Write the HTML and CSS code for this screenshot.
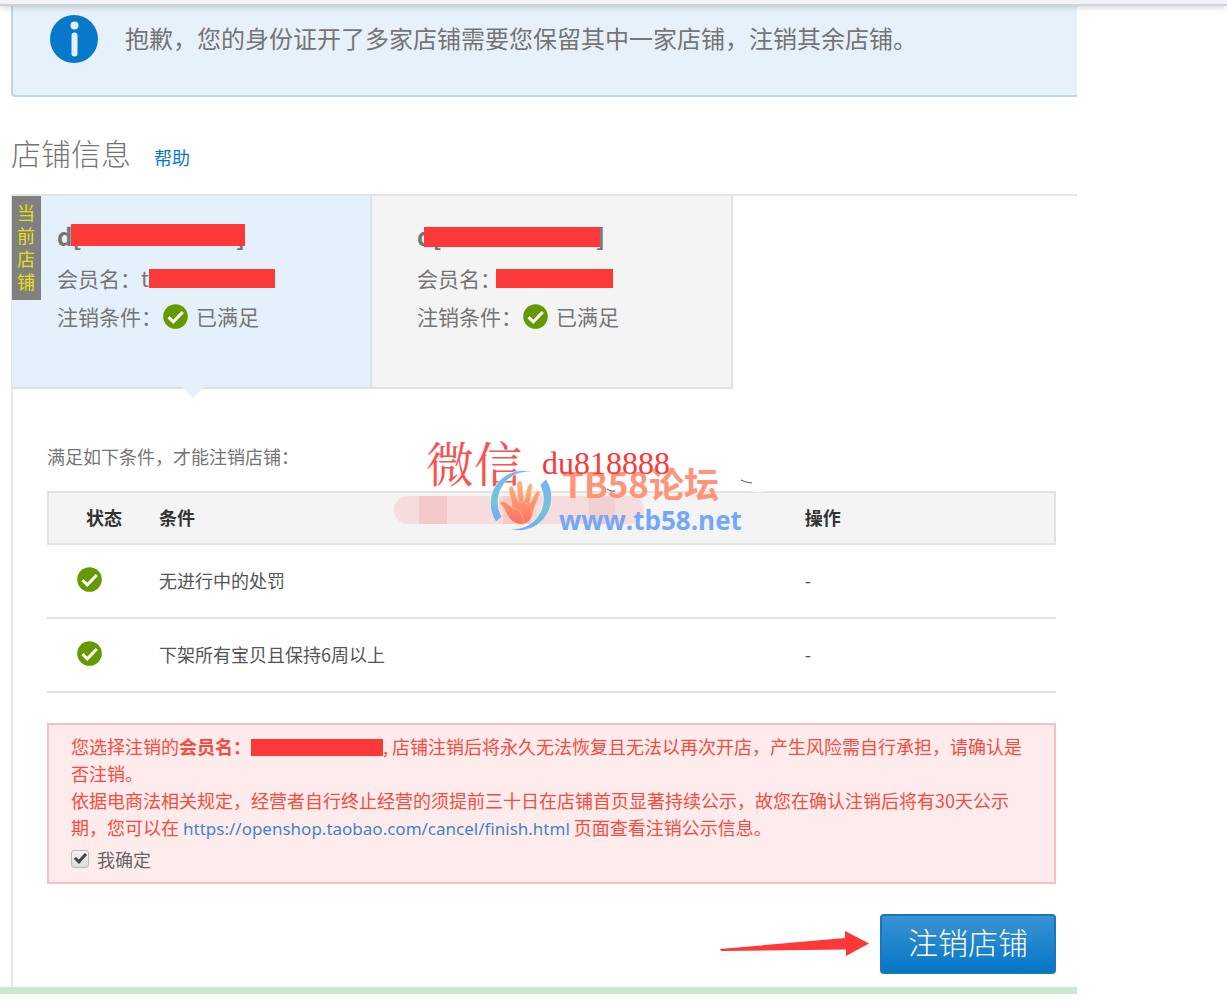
FILE: index.html
```html
<!DOCTYPE html>
<html lang="zh-CN">

<head>
    <meta charset="utf-8" />
    <title>注销店铺</title>
    <link rel="stylesheet" href="styles.css">
</head>

<body>
    <svg width="0" height="0" class="defs">
        <symbol id="ok" viewBox="0 0 25 25">
            <circle cx="12.5" cy="12.5" r="12.3" fill="#690" />
            <path d="M5.5 13.2l4.8 4.6L19.8 8" fill="none" stroke="#fff" stroke-width="3" />
        </symbol>
    </svg>
    <div class="topbar"></div>
    <div id="page">
        <div class="notice">
            <svg class="info" viewBox="0 0 48 48">
                <circle cx="24" cy="24" r="24" fill="#0679cb" />
                <circle cx="24.500" cy="10.500" r="4" fill="#e6f1fa" />
                <rect x="21.500" y="17.500" width="6" height="24" rx="3" fill="#e6f1fa" />
            </svg>
            <span>抱歉，您的身份证开了多家店铺需要您保留其中一家店铺，注销其余店铺。</span>
        </div>

        <div class="section-title">
            <h2>店铺信息</h2>
            <a href="#">帮助</a>
        </div>

        <div class="shops">
            <div class="tabs">
                <div class="shop active">
                    <span class="flag">当前店铺</span>
                    <div class="name"><span>d[</span><span>]</span><i class="mask"></i></div>
                    <div class="row">会员名：t<i class="mask-inline"></i></div>
                    <div class="row">注销条件：<svg class="ok"><use href="#ok" /></svg>已满足</div>
                </div>
                <div class="shop">
                    <div class="name"><span>d[</span><span>]</span><i class="mask"></i></div>
                    <div class="row">会员名：<i class="mask-inline"></i></div>
                    <div class="row">注销条件：<svg class="ok"><use href="#ok" /></svg>已满足</div>
                </div>
            </div>

            <div class="panel">
                <p class="tip">满足如下条件，才能注销店铺：</p>
                <table class="conditions">
                    <thead>
                        <tr>
                            <th class="col-state">状态</th>
                            <th class="col-cond">条件</th>
                            <th>操作</th>
                        </tr>
                    </thead>
                    <tbody>
                        <tr>
                            <td class="col-state"><svg class="ok"><use href="#ok" /></svg></td>
                            <td>无进行中的处罚</td>
                            <td>-</td>
                        </tr>
                        <tr>
                            <td class="col-state"><svg class="ok"><use href="#ok" /></svg></td>
                            <td>下架所有宝贝且保持6周以上</td>
                            <td>-</td>
                        </tr>
                    </tbody>
                </table>

                <div class="alert">
                    <p>您选择注销的<b>会员名：</b><i class="mask-inline"></i>, 店铺注销后将永久无法恢复且无法以再次开店，产生风险需自行承担，请确认是否注销。</p>
                    <p>依据电商法相关规定，经营者自行终止经营的须提前三十日在店铺首页显著持续公示，故您在确认注销后将有30天公示期，您可以在 <a href="https://openshop.taobao.com/cancel/finish.html">https://openshop.taobao.com/cancel/finish.html</a> 页面查看注销公示信息。</p>
                    <div class="confirm">
                        <input type="checkbox" id="agree" checked>
                        <label for="agree">我确定</label>
                    </div>
                </div>

                <div class="actions">
                    <svg class="arrow" viewBox="0 0 150 26">
                        <path d="M0 18L125 7V0L149 12.500L126 25V18.500L1 20z" fill="#fd3838" />
                    </svg>
                    <button type="button" class="submit">注销店铺</button>
                </div>

                <svg class="watermark" viewBox="0 0 390 110">
                    <rect x="0" y="60" width="250" height="28" rx="14" fill="#f6dcdc" />
                    <rect x="25" y="60" width="28" height="28" fill="#f5c9c9" />
                    <rect x="109" y="60" width="28" height="28" fill="#f5caca" />
                    <rect x="195" y="60" width="26" height="28" fill="#f3d0d0" />
                    <text class="wm-label" x="32" y="46">微信</text>
                    <ellipse cx="364" cy="51" rx="16" ry="5" fill="#fff" />
                    <path d="M142 37A33 33 0 0 0 102 86L108 81A30 30 0 0 1 142 37z" fill="url(#ring)" stroke="#fff" stroke-width=".6" />
                    <path d="M152 43A33 33 0 0 1 112 92A30 30 0 0 0 146 49z" fill="url(#ring)" stroke="#fff" stroke-width=".6" />
                    <path d="M117 84C111 79 112 72 106 68C105 65 109 64 113 67L118 71L115 53C116 49 119 50 120 54L124 65L123 48C124 44 128 44 128 48L130 65L134 50C136 46 139 48 138 52L136 67L142 56C145 53 147 56 145 60L140 73C138 81 137 86 130 88C124 89 120 87 117 84z" fill="url(#hand)" stroke="#fbd0b0" />
                    <path d="M118 72Q128 72 130 86M124 66Q136 65 138 76" fill="none" stroke="#ffb07a" />
                    <text class="wm-name" x="168" y="62">TB58论坛</text>
                    <text class="wm-id" x="148" y="38">du818888</text>
                    <text class="wm-url" x="165" y="94">www.tb58.net</text>
                    <path d="M213 53q4 3 8 2M347 44l5 2 6 1" fill="none" stroke="#555" />
                    <defs>
                        <linearGradient id="ring" x1="0" y1="0" x2="0" y2="1">
                            <stop offset="0" stop-color="#75b4f5" />
                            <stop offset=".6" stop-color="#75c4d8" />
                            <stop offset="1" stop-color="#75a9f5" />
                        </linearGradient>
                        <linearGradient id="hand" x1="0" y1="0" x2="0" y2="1">
                            <stop offset="0" stop-color="#f8b783" />
                            <stop offset="1" stop-color="#ff6e62" />
                        </linearGradient>
                    </defs>
                </svg>
            </div>
        </div>
        <div class="footer-line"></div>
    </div>
</body>

</html>
```
FILE: styles.css
```css
body {
    margin: 0;
    background-color: #fff;
    color: #757575;
    font-family: "Noto Sans CJK SC", sans-serif;
    font-size: 18px;
}

h2,
p {
    margin: 0;
    font-weight: normal;
}

a {
    color: #0679cb;
    text-decoration: none;
}

.defs {
    position: absolute;
}

.topbar {
    position: relative;
    height: 4px;
    background-color: #f1f3f8;
    border-bottom: 2px solid #d0d4da;
    box-shadow: 0 1px 6px rgba(0, 0, 0, 0.2);
}

#page {
    margin-right: 150px;
    padding-left: 11px;
}

.notice {
    display: flex;
    align-items: flex-start;
    gap: 27px;
    padding: 9px 0 32px 37px;
    background-color: #e6f1fa;
    border: 2px solid #b9d9ef;
    border-width: 0 0 2px 2px;
    border-radius: 0 0 0 4px;
    font-size: 24px;
    line-height: 46px;
}

.info {
    flex: none;
    width: 48px;
    height: 48px;
}

.section-title {
    display: flex;
    align-items: baseline;
    gap: 23px;
    padding: 33px 0 19px;
}

.section-title h2 {
    font-size: 30px;
    font-weight: 300;
    line-height: 45px;
}

.shops {
    border-top: 2px solid #e4e4e4;
}

.tabs {
    display: flex;
}

.shop {
    position: relative;
    box-sizing: border-box;
    width: 361px;
    height: 193px;
    padding: 25px 0 0 45px;
    background-color: #f4f4f4;
    border-right: 2px solid #dfe1e3;
    border-bottom: 2px solid #dfe1e3;
    font-size: 21px;
}

.shop.active {
    background-color: #e5f1fa;
    border-left: 1px solid #dfe1e3;
}

/* pointer under the selected shop */
.shop.active::after {
    content: "";
    position: absolute;
    left: 170px;
    top: 191px;
    border: 11px solid transparent;
    border-top-color: #e5f1fa;
    border-bottom: 0;
}

.flag {
    position: absolute;
    left: 0;
    top: 0;
    width: 18px;
    padding: 5px 6px 7px 5px;
    background-color: #808080;
    color: #e6df14;
    font-size: 18px;
    line-height: 23px;
}

.name {
    position: relative;
    display: flex;
    justify-content: space-between;
    width: 188px;
    margin-bottom: 8px;
    font-size: 24px;
    font-weight: bold;
    line-height: 30px;
}

.mask {
    position: absolute;
    top: 3px;
    left: 14px;
    width: 174px;
    height: 22px;
    background-color: #fd3838;
}

.shop:not(.active) .mask {
    top: 6px;
    left: 7px;
    width: 176px;
    height: 20px;
}

.row {
    display: flex;
    align-items: center;
    line-height: 38px;
}

.mask-inline {
    display: inline-block;
    width: 126px;
    height: 19px;
    background-color: #fd3838;
}

.shop:not(.active) .mask-inline {
    width: 117px;
    margin-left: -5px;
}

.ok {
    display: block;
    width: 25px;
    height: 25px;
}

.row .ok {
    margin: 0 8px 0 1px;
}

.panel {
    position: relative;
    padding: 53px 21px 13px 34px;
    border-left: 2px solid #e8e8e8;
}

.tip {
    margin-bottom: 21px;
    line-height: 28px;
}

.conditions {
    width: 100%;
    table-layout: fixed;
    border-spacing: 0;
    color: #555;
}

.conditions th,
.conditions td {
    box-sizing: border-box;
    padding: 0 0 3px;
    text-align: left;
    border-bottom: 2px solid #e2e2e2;
}

.conditions th {
    height: 54px;
    background-color: #f4f4f4;
    border-top: 2px solid #e2e2e2;
    color: #333;
}

.conditions th:first-child {
    border-left: 2px solid #e2e2e2;
}

.conditions th:last-child {
    border-right: 2px solid #e2e2e2;
}

.conditions td {
    height: 74px;
}

.conditions th.col-state {
    width: 112px;
    padding-left: 37px;
}

.conditions td.col-state {
    padding-left: 30px;
}

.conditions .col-cond {
    width: 64%;
}

.alert {
    margin-top: 30px;
    padding: 8px 22px 6px;
    background-color: #feecec;
    border: 2px solid #f9c0c0;
    color: #f84a40;
    line-height: 27px;
}

.alert .mask-inline {
    width: 132px;
    height: 17px;
    vertical-align: -2px;
}

.alert a {
    color: #3f86c6;
    font-family: "Noto Sans", sans-serif;
    font-size: 17px;
}

.confirm {
    display: flex;
    align-items: center;
    gap: 8px;
    color: #666;
    line-height: 34px;
}

.confirm input {
    width: 18px;
    height: 18px;
    margin: 0;
    appearance: none;
    border: 1px solid #bbb;
    border-radius: 3px;
    background: linear-gradient(#f2f2f2, #dcdcdc);
}

.confirm input:checked::before {
    content: "";
    display: block;
    width: 4px;
    height: 9px;
    margin: 0 0 0 5px;
    border: solid #444;
    border-width: 0 3px 3px 0;
    transform: rotate(42deg);
}

.actions {
    display: flex;
    justify-content: flex-end;
    align-items: center;
    gap: 10px;
    margin-top: 30px;
}

.arrow {
    width: 150px;
    height: 26px;
}

.submit {
    height: 60px;
    padding: 0 26px 6px;
    border: 2px solid #1b78b8;
    border-radius: 4px;
    background: linear-gradient(#3994d3, #0676c6);
    color: #fff;
    font-family: inherit;
    font-size: 30px;
    font-weight: 300;
    line-height: 50px;
}

.footer-line {
    height: 7px;
    margin-left: -11px;
    background-color: #c8ebcf;
}

/* forum stamp lying over the table */
.watermark {
    position: absolute;
    left: 381px;
    top: 47px;
    width: 390px;
    height: 110px;
    overflow: visible;
}

.wm-label {
    fill: #f95252;
    font-family: "Noto Serif CJK SC", "Noto Sans CJK SC", serif;
    font-size: 48px;
}

.wm-id {
    fill: #fd3838;
    font-family: "Liberation Serif", serif;
    font-size: 32px;
}

.wm-name {
    fill: #ff9478;
    font-size: 35px;
    font-weight: bold;
}

.wm-url {
    fill: #76a7f7;
    font-family: "Open Sans", sans-serif;
    font-size: 26px;
    font-weight: bold;
}
```
